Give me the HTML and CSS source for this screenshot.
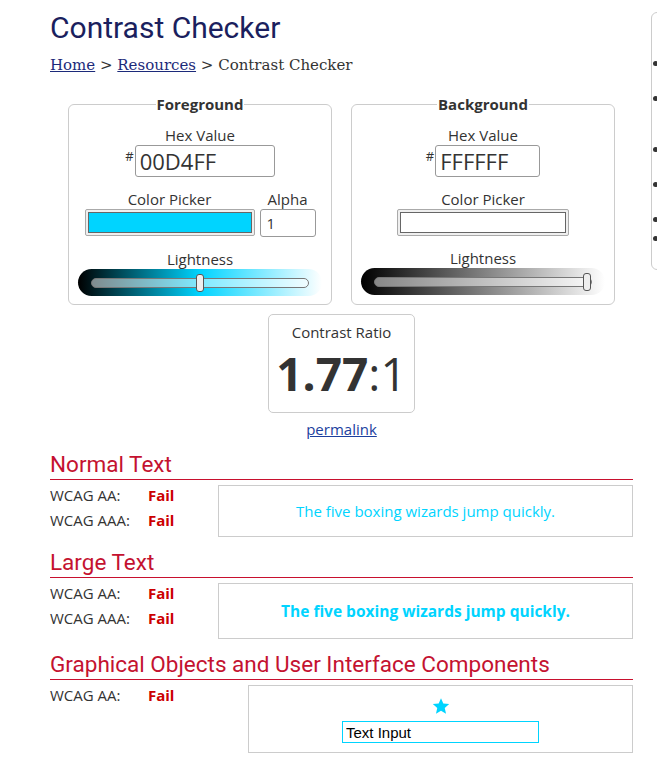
FILE: index.html
```html
<!doctype html>
<html lang="en">
<head>
    <meta charset="UTF-8">
    <meta name="viewport" content="width=device-width, initial-scale=1.0">
    <title>WebAIM: Contrast Checker</title>
    <link rel="stylesheet" href="styles.css">
</head>
<body>
<div class="page">
    <main class="mainColumn">
        <h1 class="pageTitle">Contrast Checker</h1>
        <p class="breadcrumb"><a href="#">Home</a> &gt; <a href="#">Resources</a> &gt; Contrast Checker</p>

        <div class="colorPickers">
            <fieldset class="colorSet">
                <legend>Foreground</legend>
                <div class="fieldLabel">Hex Value</div>
                <div class="hexRow">
                    <span class="hash">#</span>
                    <input type="text" class="hexInput" value="00D4FF">
                </div>
                <div class="pickerRow">
                    <div class="pickerCol">
                        <div class="fieldLabel">Color Picker</div>
                        <div class="swatch"><div class="swatchColor fgColor"></div></div>
                    </div>
                    <div class="pickerCol">
                        <div class="fieldLabel">Alpha</div>
                        <input type="text" class="alphaInput" value="1">
                    </div>
                </div>
                <div class="fieldLabel">Lightness</div>
                <div class="lightness fgLightness">
                    <input type="range" min="0" max="100" value="50">
                </div>
            </fieldset>

            <fieldset class="colorSet">
                <legend>Background</legend>
                <div class="fieldLabel">Hex Value</div>
                <div class="hexRow">
                    <span class="hash">#</span>
                    <input type="text" class="hexInput hexShort" value="FFFFFF">
                </div>
                <div class="pickerRow">
                    <div class="pickerCol">
                        <div class="fieldLabel">Color Picker</div>
                        <div class="swatch swatchWide"><div class="swatchColor bgColor"></div></div>
                    </div>
                </div>
                <div class="fieldLabel">Lightness</div>
                <div class="lightness bgLightness">
                    <input type="range" min="0" max="100" value="100">
                </div>
            </fieldset>
        </div>

        <div class="ratioBox">
            <div class="ratioLabel">Contrast Ratio</div>
            <div class="ratioValue"><strong>1.77</strong>:1</div>
        </div>
        <div class="permalink"><a href="#">permalink</a></div>

        <section class="result">
            <h2>Normal Text</h2>
            <div class="resultBody">
                <div class="passList">
                    <div class="passRow"><span class="level">WCAG AA:</span><span class="fail">Fail</span></div>
                    <div class="passRow"><span class="level">WCAG AAA:</span><span class="fail">Fail</span></div>
                </div>
                <div class="sample">The five boxing wizards jump quickly.</div>
            </div>
        </section>

        <section class="result">
            <h2>Large Text</h2>
            <div class="resultBody">
                <div class="passList">
                    <div class="passRow"><span class="level">WCAG AA:</span><span class="fail">Fail</span></div>
                    <div class="passRow"><span class="level">WCAG AAA:</span><span class="fail">Fail</span></div>
                </div>
                <div class="sample sampleLarge">The five boxing wizards jump quickly.</div>
            </div>
        </section>

        <section class="result">
            <h2>Graphical Objects and User Interface Components</h2>
            <div class="resultBody">
                <div class="passList passWide">
                    <div class="passRow"><span class="level">WCAG AA:</span><span class="fail">Fail</span></div>
                </div>
                <div class="sample sampleGraphic">
                    <svg class="star" width="18" height="18" viewBox="0 0 24 24">
                        <polygon points="12,1.5 15.1,8.7 22.9,9.4 17,14.6 18.7,22.3 12,18.3 5.3,22.3 7,14.6 1.1,9.4 8.9,8.7" fill="#00D4FF"/>
                    </svg>
                    <input type="text" class="sampleInput" value="Text Input">
                </div>
            </div>
        </section>
    </main>

    <aside class="sidebar">
        <ul class="sideNav">
            <li class="navItem"></li>
            <li class="navItem double"></li>
            <li class="navItem"></li>
            <li class="navItem"></li>
            <li class="navItem short"></li>
            <li class="navItem"></li>
        </ul>
    </aside>
</div>
</body>
</html>
```

FILE: styles.css
```css
html, body {
    overflow: hidden;
}
body {
    margin: 0;
    background: #fff;
    color: #333;
    font-family: "Open Sans", "Liberation Sans", sans-serif;
    font-size: 15px;
}
.page {
    display: flex;
    align-items: flex-start;
    padding: 10px 0 0 50px;
}
.mainColumn {
    width: 583px;
    flex-shrink: 0;
}

.pageTitle {
    margin: 0;
    font-family: Roboto, sans-serif;
    font-weight: 400;
    font-size: 30px;
    line-height: 36px;
    color: #1b1f5e;
}
.breadcrumb {
    margin: 9px 0 0;
    font-family: "DejaVu Serif", serif;
    font-size: 15px;
    line-height: 20px;
    color: #333;
}
.breadcrumb a {
    color: #1c2a7a;
}

.colorPickers {
    display: flex;
    justify-content: center;
    gap: 19px;
    margin-top: 19px;
}
.colorSet {
    width: 264px;
    box-sizing: border-box;
    margin: 0;
    padding: 12px 9px 8px;
    border: 1px solid #ccc;
    border-radius: 6px;
    text-align: center;
}
.colorSet legend {
    margin: 0 auto;
    padding: 0 1px;
    font-weight: 700;
    font-size: 15px;
    line-height: 20px;
}
.fieldLabel {
    line-height: 19px;
}
.hexRow {
    display: flex;
    justify-content: center;
    margin-bottom: 13px;
}
.hash {
    font-size: 13px;
    line-height: 14px;
    margin: 4px 1px 0 0;
}
.hexInput {
    width: 140px;
    height: 32px;
    box-sizing: border-box;
    padding: 0 4px;
    border: 1px solid #999;
    border-radius: 3px;
    font-family: "Open Sans", sans-serif;
    font-size: 22px;
    color: #333;
}
.hexShort {
    width: 105px;
}
.pickerRow {
    display: flex;
    justify-content: center;
    gap: 5px;
    margin-bottom: 13px;
}
.swatch {
    width: 170px;
    height: 27px;
    box-sizing: border-box;
    padding: 2px;
    border: 1px solid #aaa;
    border-radius: 2px;
    background: #efefef;
}
.swatchWide {
    width: 172px;
}
.swatchColor {
    height: 100%;
    box-sizing: border-box;
    border: 1px solid #666;
}
.fgColor {
    background: #00d4ff;
}
.bgColor {
    background: #fff;
}
.alphaInput {
    width: 56px;
    height: 28px;
    box-sizing: border-box;
    padding: 0 6px;
    border: 1px solid #999;
    border-radius: 3px;
    font-family: "Open Sans", sans-serif;
    font-size: 15px;
    color: #333;
}

.lightness {
    height: 27px;
    padding: 0 13px;
    border-radius: 14px;
}
.fgLightness {
    background: linear-gradient(to right, #000, #00d4ff, #fff);
}
.bgLightness {
    background: linear-gradient(to right, #000, #808080, #fff);
}
.lightness input {
    -webkit-appearance: none;
    appearance: none;
    display: block;
    width: 100%;
    height: 27px;
    margin: 0;
    background: transparent;
}
.lightness input::-webkit-slider-runnable-track {
    height: 10px;
    box-sizing: border-box;
    border: 1px solid #777;
    border-radius: 5px;
    background: rgba(255, 255, 255, 0.5);
}
.lightness input::-webkit-slider-thumb {
    -webkit-appearance: none;
    width: 8px;
    height: 18px;
    margin-top: -5px;
    box-sizing: border-box;
    border: 1px solid #555;
    border-radius: 3px;
    background: #eee;
}

.ratioBox {
    width: 147px;
    box-sizing: border-box;
    margin: 9px auto 0;
    padding: 7px 0 8px;
    border: 1px solid #ccc;
    border-radius: 5px;
    text-align: center;
}
.ratioLabel {
    line-height: 20px;
}
.ratioValue {
    font-size: 46px;
    line-height: 62px;
    color: #333;
}
.permalink {
    margin-top: 6px;
    text-align: center;
    line-height: 20px;
}
.permalink a {
    color: #1c3f9e;
}

.result h2 {
    margin: 12px 0 0;
    padding-bottom: 1px;
    border-bottom: 1px solid #c8102e;
    font-family: Roboto, sans-serif;
    font-weight: 400;
    font-size: 22.5px;
    line-height: 27px;
    color: #c41230;
}
.resultBody {
    display: flex;
    align-items: flex-start;
    margin-top: 3px;
}
.passList {
    width: 168px;
    flex-shrink: 0;
}
.passWide {
    width: 198px;
}
.passRow {
    display: flex;
    line-height: 25px;
}
.level {
    width: 98px;
}
.fail {
    font-weight: 700;
    color: #c00;
}
.sample {
    flex: 1;
    height: 52px;
    box-sizing: border-box;
    margin-top: 2px;
    border: 1px solid #ccc;
    display: flex;
    align-items: center;
    justify-content: center;
    color: #00d4ff;
    font-size: 15px;
}
.sampleLarge {
    height: 56px;
    font-size: 15.5px;
    font-weight: 700;
}
.sampleGraphic {
    height: 68px;
    flex-direction: column;
    justify-content: flex-start;
    padding-top: 11px;
}
.star {
    display: block;
    margin-bottom: 6px;
}
.sampleInput {
    width: 197px;
    height: 22px;
    box-sizing: border-box;
    padding: 0 3px;
    border: 1px solid #00d4ff;
    font-family: "Liberation Sans", Arial, sans-serif;
    font-size: 15px;
    color: #000;
}

.sidebar {
    flex-shrink: 0;
    width: 260px;
    height: 258px;
    box-sizing: border-box;
    margin: 2px 0 0 18px;
    border: 1px solid #ccc;
    border-radius: 6px;
    background: #fff;
}
.sideNav {
    list-style: none;
    margin: 0;
    padding: 42px 0 0 12px;
}
.navItem {
    position: relative;
    height: 35px;
}
.navItem::before {
    content: "";
    position: absolute;
    left: -11px;
    top: 6px;
    width: 5px;
    height: 5px;
    border-radius: 50%;
    background: #333;
}
.navItem.double {
    height: 51px;
}
.navItem.short {
    height: 19px;
}
```
